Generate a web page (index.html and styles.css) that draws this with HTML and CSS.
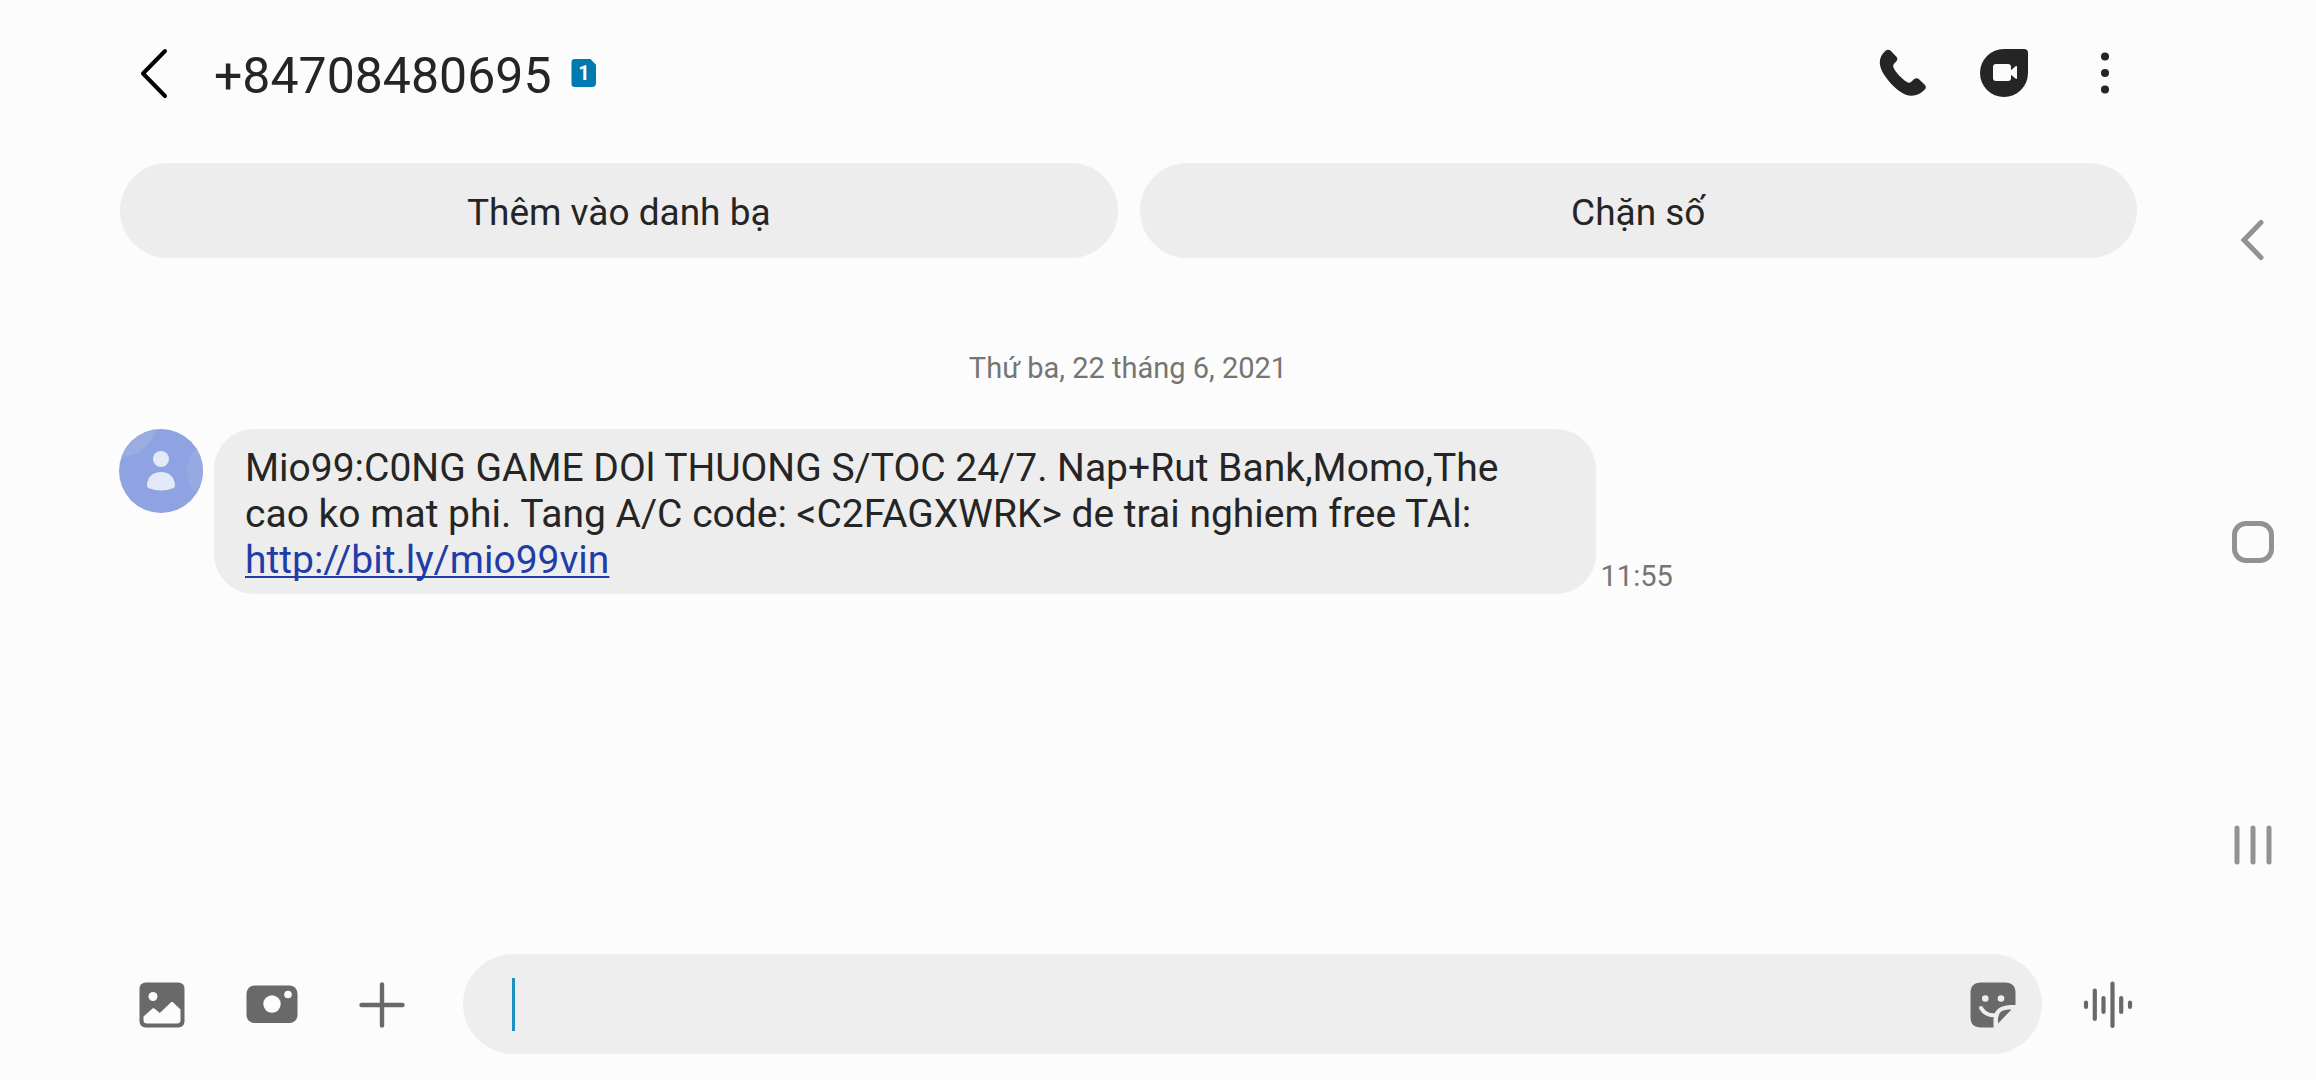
FILE: index.html
```html
<!DOCTYPE html>
<html lang="vi">
<head>
  <meta charset="utf-8">
  <meta name="viewport" content="width=device-width, initial-scale=1">
  <title>+84708480695</title>
  <link rel="stylesheet" href="styles.css">
</head>
<body>
  <main class="conversation">
    <header class="topbar">
      <button class="icon-button" type="button" aria-label="Quay lại">
        <svg width="48" height="52" viewBox="0 0 48 52" fill="none" stroke="#000" stroke-width="4" stroke-linecap="round" stroke-linejoin="round"><path d="M35 4 13 26.500 35 49"/></svg>
      </button>
      <h1 class="topbar-title">+84708480695</h1>
      <span class="sim">1</span>
      <div class="topbar-actions">
        <button class="icon-button" type="button" aria-label="Gọi">
          <svg width="48" height="48" viewBox="0 0 48 48" fill="#252525"><path d="M6.500 1.700C8.300.2 10.300.4 12 2L17.200 7.500C18.800 9.200 18.700 11.200 17 12.800L15.200 14.600C13.900 16 14 17.500 14.800 19.200 16.500 23 22.500 29.500 27.500 32.800 29.200 33.900 30.700 34.200 32.200 32.800L34.500 30.700C36.500 28.800 38.500 28.800 40.300 30.500L45.500 35.600C47.200 37.300 47.300 39 45.800 40.600 38 48.500 29 49 19.500 41.500 13 36.300 6.500 29 3 22 -.5 14.500-.2 7.500 6.500 1.700Z"/></svg>
        </button>
        <button class="icon-button" type="button" aria-label="Gọi video">
          <svg width="48" height="48" viewBox="0 0 48 48"><path fill="#252525" d="M24 0H44Q48 0 48 4V24A24 24 0 1 1 24 0Z"/><rect x="13" y="15" width="18" height="17" rx="3" fill="#fcfcfc"/><path fill="#fcfcfc" d="M30 22 35.500 17.300Q37 16.500 37 18V29Q37 30.500 35.500 29.600L30 25Z"/></svg>
        </button>
        <button class="icon-button" type="button" aria-label="Tùy chọn khác">
          <svg width="10" height="48" viewBox="0 0 10 48" fill="#252525"><circle cx="5" cy="7.500" r="4"/><circle cx="5" cy="24" r="4"/><circle cx="5" cy="40.500" r="4"/></svg>
        </button>
      </div>
    </header>

    <div class="quick-actions">
      <button class="pill-button" type="button">Thêm vào danh bạ</button>
      <button class="pill-button" type="button">Chặn số</button>
    </div>

    <section class="thread">
      <time class="thread-date" datetime="2021-06-22">Thứ ba, 22 tháng 6, 2021</time>
      <article class="message">
        <svg class="avatar" width="84" height="84" viewBox="0 0 84 84">
          <defs><clipPath id="face"><circle cx="42" cy="42" r="42"/></clipPath></defs>
          <g clip-path="url(#face)">
            <rect width="84" height="84" fill="#8fa3e2"/>
            <circle cx="1" cy="-9" r="37" fill="#9bade0"/>
            <circle cx="101" cy="42" r="33" fill="#97a9e1"/>
          </g>
          <g fill="#e4e9f7"><circle cx="42" cy="30" r="8"/><path d="M28 57C28 48 34 43 42 43S56 48 56 57Q56 58.500 54 59.200 42 64 30 59.200 28 58.500 28 57Z"/></g>
        </svg>
        <div class="message-body">
          <p class="bubble">Mio99:C0NG GAME DOl THUONG S/TOC 24/7. Nap+Rut Bank,Momo,The cao ko mat phi. Tang A/C code: &lt;C2FAGXWRK&gt; de trai nghiem free TAl: <a class="bubble-link" href="http://bit.ly/mio99vin">http://bit.ly/mio99vin</a></p>
          <time class="message-time" datetime="2021-06-22T11:55">11:55</time>
        </div>
      </article>
    </section>

    <form class="composer">
      <button class="tool-button" type="button" aria-label="Thư viện">
        <svg width="46" height="46" viewBox="0 0 46 46"><rect x=".5" y=".5" width="45" height="45" rx="6" fill="#696969"/><circle cx="14" cy="14.500" r="4.500" fill="#fcfcfc"/><path fill="#fcfcfc" d="M4.500 34.500 13.500 26.600Q14.500 25.800 15.500 26.600L20.800 31 32 20.200Q33 19.300 34 20.200L41.500 27.500V38Q41.500 41.500 38 41.500H8Q4.500 41.500 4.500 38Z"/></svg>
      </button>
      <button class="tool-button" type="button" aria-label="Máy ảnh">
        <svg width="52" height="46" viewBox="0 0 52 46"><rect x=".5" y="3.500" width="51" height="37.500" rx="8" fill="#696969"/><circle cx="26" cy="22" r="8.700" fill="#fcfcfc"/><circle cx="42" cy="12.500" r="3.800" fill="#fcfcfc"/></svg>
      </button>
      <button class="tool-button" type="button" aria-label="Thêm">
        <svg width="46" height="46" viewBox="0 0 46 46" fill="none" stroke="#696969" stroke-width="4.400" stroke-linecap="round"><path d="M23 2.500V43.500M2.500 23H43.500"/></svg>
      </button>
      <div class="field">
        <span class="caret"></span>
        <input class="field-input" type="text" aria-label="Tin nhắn">
        <button class="sticker-button" type="button" aria-label="Nhãn dán">
          <svg width="46" height="46" viewBox="0 0 46 46"><path fill="#696969" d="M11 .5H35Q45.500.5 45.500 11V23H40Q23.500 24 23.500 38V45.500H11Q.5 45.500.5 35V11Q.5.5 11 .5Z"/><g fill="#eee"><circle cx="15.300" cy="16.500" r="3.300"/><circle cx="31" cy="16.500" r="3.300"/></g><path fill="none" stroke="#eee" stroke-width="4" stroke-linecap="round" d="M11 26Q15.500 33.500 24 33.300"/><path fill="#696969" d="M41.500 27.500 28 41.500V37Q28 28 38 27.500Z"/></svg>
        </button>
      </div>
      <button class="voice-button" type="button" aria-label="Ghi âm">
        <svg width="50" height="48" viewBox="0 0 50 48" fill="none" stroke="#696969" stroke-width="4.200" stroke-linecap="round"><path d="M3 21.500V26M11.800 9.500V38M20.500 17V31M29.500 2.500V45M38.200 17V31M47 21.500V26"/></svg>
      </button>
    </form>
  </main>

  <nav class="system-nav" aria-label="Điều hướng">
    <button class="nav-button" type="button" aria-label="Trở lại">
      <svg width="42" height="42" viewBox="0 0 42 42" fill="none" stroke="#929292" stroke-width="5" stroke-linecap="round"><path d="M29 3.500 12 21 29 38.500"/></svg>
    </button>
    <button class="nav-button" type="button" aria-label="Màn hình chính">
      <svg width="42" height="42" viewBox="0 0 42 42" fill="none" stroke="#929292" stroke-width="5"><rect x="2.500" y="2.500" width="37" height="37" rx="11.500"/></svg>
    </button>
    <button class="nav-button" type="button" aria-label="Gần đây">
      <svg width="42" height="42" viewBox="0 0 42 42" fill="none" stroke="#929292" stroke-width="5" stroke-linecap="round"><path d="M5 4V38M21 4V38M37 4V38"/></svg>
    </button>
  </nav>
</body>
</html>
```
FILE: styles.css
```css
* {
  box-sizing: border-box;
}

body {
  display: flex;
  min-height: 100vh;
  margin: 0;
  background: #fcfcfc;
  color: #252525;
  font-family: Roboto, "Noto Sans", sans-serif;
}

button {
  display: flex;
  align-items: center;
  justify-content: center;
  padding: 0;
  border: 0;
  background: none;
  color: inherit;
  font: inherit;
}

svg {
  display: block;
  flex: none;
}

.conversation {
  display: flex;
  flex: 1;
  flex-direction: column;
  min-width: 0;
}

/* Header */
.topbar {
  display: flex;
  align-items: center;
  height: 146px;
  padding: 0 35px 0 103px;
}

.icon-button {
  width: 101px;
  height: 96px;
}

.topbar-title {
  margin: 0 0 0 10px;
  padding-top: 6px;
  font-size: 50px;
  font-weight: 400;
  line-height: 60px;
}

.sim {
  width: 25px;
  height: 28px;
  margin-left: 20px;
  border-radius: 4px;
  background: #007bb2;
  clip-path: polygon(0 0, 76% 0, 100% 22%, 100% 100%, 0 100%);
  color: #fff;
  font-size: 20px;
  font-weight: 700;
  line-height: 28px;
  text-align: center;
}

.topbar-actions {
  display: flex;
  margin-left: auto;
}

.quick-actions {
  display: flex;
  gap: 22px;
  padding: 17px 53px 0 120px;
}

.pill-button {
  flex: 1;
  height: 95px;
  padding-top: 4px;
  border-radius: 48px;
  background: #ededed;
  font-size: 37px;
}

/* Messages */
.thread {
  display: flex;
  flex: 1;
  flex-direction: column;
  padding: 92px 53px 0 119px;
}

.thread-date {
  color: #757575;
  font-size: 29px;
  line-height: 36px;
  text-align: center;
}

.message {
  display: flex;
  align-items: flex-start;
  gap: 11px;
  margin-top: 43px;
}

.message-body {
  display: flex;
  flex: 1;
  align-items: flex-end;
  gap: 5px;
}

.bubble {
  max-width: calc(72% - 3px);
  margin: 0;
  padding: 16px 31px 11px;
  border-radius: 40px;
  background: #ededed;
  font-size: 39px;
  line-height: 46px;
}

.bubble-link {
  color: #1f3da8;
  text-decoration-thickness: 2px;
  text-decoration-skip-ink: none;
  text-underline-offset: 3px;
}

.message-time {
  color: #757575;
  font-size: 29px;
  line-height: 36px;
}

/* Composer */
.composer {
  display: flex;
  align-items: center;
  padding: 0 16px 26px 107px;
}

.tool-button,
.sticker-button,
.voice-button {
  height: 100px;
  padding-top: 2px;
}

.tool-button {
  width: 110px;
}

.field {
  display: flex;
  flex: 1;
  align-items: center;
  height: 100px;
  margin-left: 26px;
  padding-left: 49px;
  border-radius: 50px;
  background: #eee;
}

.caret {
  width: 3px;
  height: 53px;
  background: #1a92bd;
}

.field-input {
  flex: 1;
  min-width: 0;
  height: 60px;
  padding: 0;
  border: 0;
  outline: 0;
  background: none;
  color: inherit;
  font: inherit;
  font-size: 39px;
}

.sticker-button {
  width: 98px;
}

.voice-button {
  width: 132px;
}

/* System navigation */
.system-nav {
  display: flex;
  flex-direction: column;
  width: 126px;
  padding: 89px 0 84px;
}

.nav-button {
  flex: 1;
  width: 100%;
}
```
